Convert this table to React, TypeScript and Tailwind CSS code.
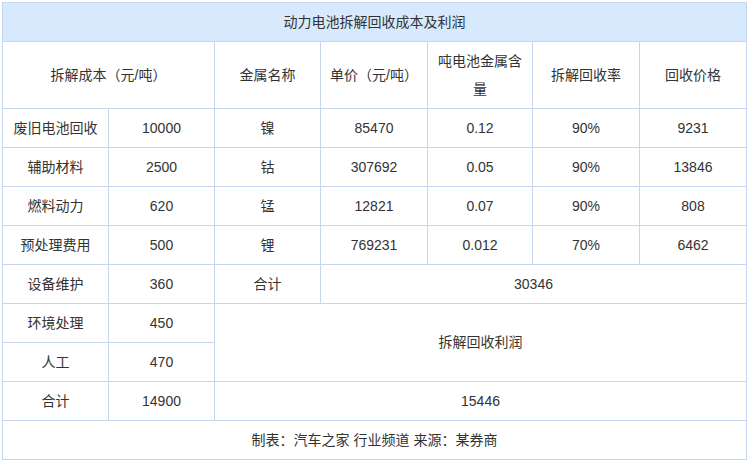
import React from "react";

const B = "border border-[#c6d6ef]";
const td = `${B} text-center align-middle p-0`;

export default function App() {
  const metals = [
    ["废旧电池回收", "10000", "镍", "85470", "0.12", "90%", "9231"],
    ["辅助材料", "2500", "钴", "307692", "0.05", "90%", "13846"],
    ["燃料动力", "620", "锰", "12821", "0.07", "90%", "808"],
    ["预处理费用", "500", "锂", "769231", "0.012", "70%", "6462"],
  ];
  return (
    <div
      className="bg-white pl-[2px] pt-[2px] text-[14px] text-[#333]"
      style={{ fontFamily: '"Liberation Sans", "Noto Sans CJK SC", sans-serif' }}
    >
      <table className="border-collapse table-fixed w-[744px]">
        <colgroup>
          <col className="w-[106px]" />
          <col className="w-[106px]" />
          <col className="w-[106px]" />
          <col className="w-[107px]" />
          <col className="w-[105px]" />
          <col className="w-[107px]" />
          <col className="w-[107px]" />
        </colgroup>
        <tbody>
          <tr className="h-[39px] bg-[#d7e9fd]">
            <td colSpan={7} className={td}>动力电池拆解回收成本及利润</td>
          </tr>
          <tr className="h-[67px]">
            <td colSpan={2} className={td}>拆解成本（元/吨）</td>
            <td className={td}>金属名称</td>
            <td className={td}>单价（元/吨）</td>
            <td className={`${td} leading-[28px] px-2`}>吨电池金属含量</td>
            <td className={td}>拆解回收率</td>
            <td className={td}>回收价格</td>
          </tr>
          {metals.map((r) => (
            <tr key={r[0]} className="h-[39px]">
              {r.map((c, i) => (
                <td key={i} className={td}>{c}</td>
              ))}
            </tr>
          ))}
          <tr className="h-[39px]">
            <td className={td}>设备维护</td>
            <td className={td}>360</td>
            <td className={td}>合计</td>
            <td colSpan={4} className={td}>30346</td>
          </tr>
          <tr className="h-[39px]">
            <td className={td}>环境处理</td>
            <td className={td}>450</td>
            <td colSpan={5} rowSpan={2} className={td}>拆解回收利润</td>
          </tr>
          <tr className="h-[39px]">
            <td className={td}>人工</td>
            <td className={td}>470</td>
          </tr>
          <tr className="h-[39px]">
            <td className={td}>合计</td>
            <td className={td}>14900</td>
            <td colSpan={5} className={td}>15446</td>
          </tr>
          <tr className="h-[39px]">
            <td colSpan={7} className={td}>制表：汽车之家 行业频道 来源：某券商</td>
          </tr>
        </tbody>
      </table>
    </div>
  );
}
